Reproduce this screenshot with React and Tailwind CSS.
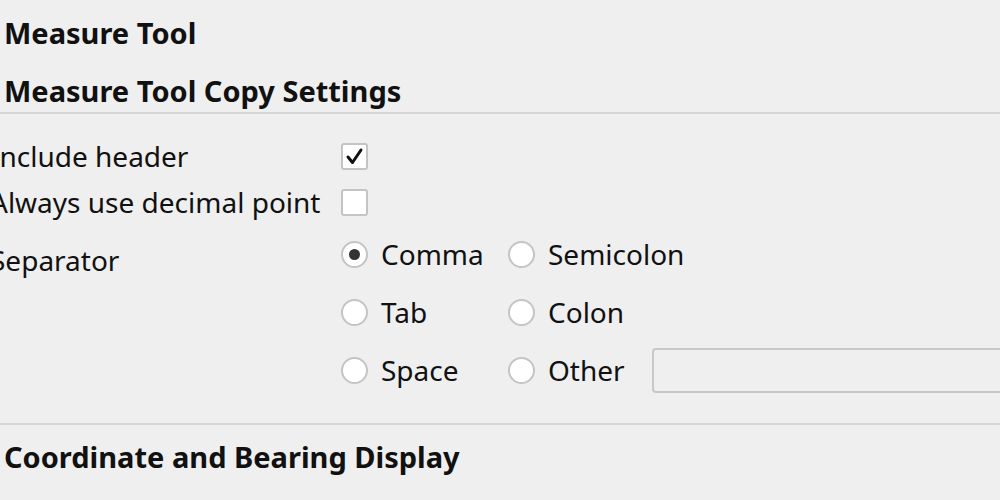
const Checkbox = ({ checked }) => (
  <div className="w-[27px] h-[27px] shrink-0 bg-white border-2 border-[#c4c4c4] rounded-[3px] flex items-center justify-center">
    {checked && (
      <svg width="19" height="19" viewBox="0 0 19 19">
        <path d="M3 10 L7.5 15.5 L16 3" fill="none" stroke="#111" strokeWidth="3" strokeLinecap="round" strokeLinejoin="round" />
      </svg>
    )}
  </div>
);

const Radio = ({ label, checked }) => (
  <div className="flex items-center gap-[13px] h-[58px]">
    <div className="w-[27px] h-[27px] shrink-0 rounded-full bg-white border-2 border-[#c4c4c4] flex items-center justify-center">
      {checked && <div className="w-[11px] h-[11px] rounded-full bg-[#333]" />}
    </div>
    <span className="whitespace-nowrap">{label}</span>
  </div>
);

export default function App() {
  return (
    <div
      className="w-[1000px] h-[500px] overflow-hidden bg-[#efefef] text-[#111] text-[28px] leading-none"
      style={{ fontFamily: '"Noto Sans", "Open Sans", sans-serif' }}
    >
      <div className="pl-[4px] pt-[15px] font-bold text-[29px] h-[34px] flex items-center box-content">Measure Tool</div>
      <div className="pl-[4px] pt-[24px] font-bold text-[29px] h-[34px] flex items-center box-content">Measure Tool Copy Settings</div>
      <div className="mt-[5px] h-[2px] bg-[#d6d6d6]" />

      <div className="ml-[-10px] pt-[25px]">
        <div className="flex items-center h-[34px]">
          <span className="w-[351px] shrink-0 whitespace-nowrap">Include header</span>
          <Checkbox checked />
        </div>
        <div className="flex items-center h-[34px] mt-[12px]">
          <span className="w-[351px] shrink-0 whitespace-nowrap">Always use decimal point</span>
          <Checkbox />
        </div>
        <div className="flex mt-[6px]">
          <span className="w-[351px] shrink-0 pt-[21px]">Separator</span>
          <div className="flex-1 grid grid-cols-[167px_144px_1fr] items-center">
            <Radio label="Comma" checked />
            <Radio label="Semicolon" />
            <div />
            <Radio label="Tab" />
            <Radio label="Colon" />
            <div />
            <Radio label="Space" />
            <Radio label="Other" />
            <div className="h-[45px] bg-[#efefef] border-2 border-[#c8c8c8] rounded-[4px] mr-[-20px]" />
          </div>
        </div>
      </div>

      <div className="mt-[24px] h-[2px] bg-[#d6d6d6]" />
      <div className="pl-[4px] pt-[14px] font-bold text-[29px] h-[34px] flex items-center box-content">Coordinate and Bearing Display</div>
    </div>
  );
}
